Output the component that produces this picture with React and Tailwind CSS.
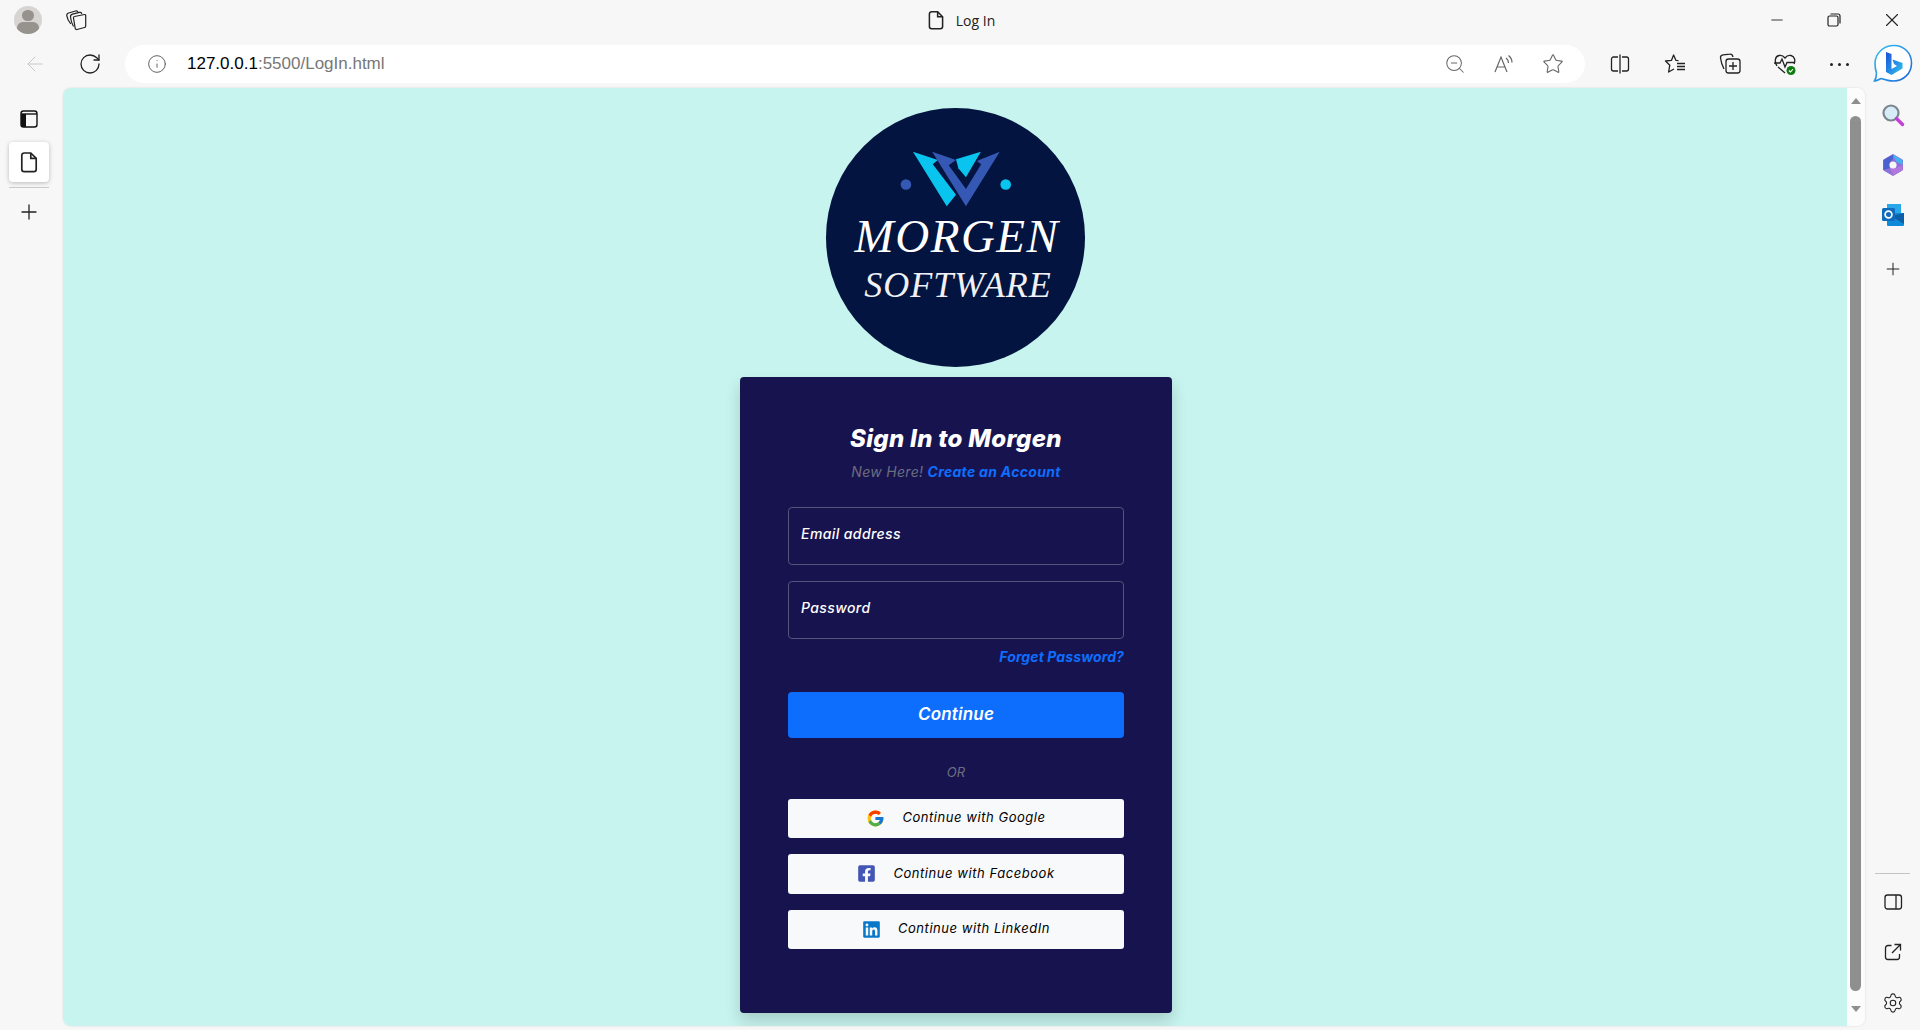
import React from "react"
import { ArrowLeft, Info, Minus, Plus, RotateCw, Settings, Star, X, ZoomOut } from "lucide-react"
import { FaFacebookSquare, FaLinkedin } from "react-icons/fa"
import { FcGoogle } from "react-icons/fc"

const TabsIcon = () => (
  <svg width="22" height="22" viewBox="0 0 22 22" fill="none" stroke="#222" strokeWidth="1.2" strokeLinejoin="round">
    <path d="M9.5 7.5 L19.5 5.5 a1 1 0 0 1 1.2 1 L20.7 17 a1.5 1.5 0 0 1 -1.2 1.5 L12 20.5 a1.5 1.5 0 0 1 -1.8 -1.2 L8.5 9 a1.2 1.2 0 0 1 1 -1.5 Z" />
    <path d="M8.5 17.5 C6.5 14 5.8 11 5.5 8 C5.3 6.5 6 5.6 7.5 5.2 L14.5 3.4 C15.8 3.1 16.5 3.6 16.8 5" />
    <path d="M5.8 15 C3.5 12 2.2 9 1.8 6.8 C1.6 5.3 2.2 4.4 3.6 4 L10.5 2 C11.8 1.7 12.6 2 13 3.2" />
  </svg>
)

const PageIcon = ({ size = 20 }) => (
  <svg width={size} height={size} viewBox="0 0 20 20" fill="none" stroke="#222" strokeWidth="1.4">
    <path d="M6 2.5 H11.5 L16 7 V16 a2 2 0 0 1 -2 2 H6 a2 2 0 0 1 -2 -2 V4.5 a2 2 0 0 1 2 -2 Z" />
    <path d="M11.5 2.5 V7 H16" />
  </svg>
)

const VerticalTabsIcon = () => (
  <svg width="20" height="20" viewBox="0 0 20 20" fill="none">
    <rect x="2" y="2" width="16" height="16" rx="2.5" stroke="#111" strokeWidth="1.4" />
    <path d="M2 5 H18" stroke="#111" strokeWidth="1.4" />
    <rect x="2" y="5" width="5" height="13" fill="#111" />
  </svg>
)

const RestoreIcon = () => (
  <svg width="16" height="16" viewBox="0 0 16 16" fill="none" stroke="#222" strokeWidth="1.2">
    <rect x="2" y="4" width="10" height="10" rx="1.5" />
    <path d="M4.5 2 H12 a2 2 0 0 1 2 2 V11.5" />
  </svg>
)

const ReadAloudIcon = () => (
  <svg width="22" height="22" viewBox="0 0 22 22" fill="none" stroke="#666" strokeWidth="1.2">
    <path d="M2 19 L8 4 L14 19 M4.2 14 H11.8" />
    <path d="M13 5 C15 6.5 15.5 8 15.5 10" />
    <path d="M15.5 2.5 C18 4.5 19 7 19 9.5" />
  </svg>
)

const SplitIcon = () => (
  <svg width="22" height="22" viewBox="0 0 22 22" fill="none" stroke="#222" strokeWidth="1.3">
    <path d="M9 4 H4.5 a2 2 0 0 0 -2 2 V16 a2 2 0 0 0 2 2 H9" />
    <path d="M13 4 H17.5 a2 2 0 0 1 2 2 V16 a2 2 0 0 1 -2 2 H13" />
    <path d="M11 1.5 V20.5" />
  </svg>
)

const FavoritesIcon = () => (
  <svg width="22" height="22" viewBox="0 0 22 22" fill="none" stroke="#222" strokeWidth="1.3">
    <path d="M14.5 7.6 L12 7.4 L9.6 2 L7.4 7.4 L1.5 8 L5.8 12.2 L4.6 19 L10 16 " strokeLinejoin="round" />
    <path d="M13 10.5 H21 M13 13.5 H21 M13 16.5 H21" />
  </svg>
)

const CollectionsIcon = () => (
  <svg width="22" height="22" viewBox="0 0 22 22" fill="none" stroke="#222" strokeWidth="1.3">
    <path d="M5 16 C3 12 2 9 1.5 5 C1.3 3 2.5 2 4 1.8 L11 1.2 C12.5 1 13.5 2 14 4" />
    <rect x="7" y="6" width="14" height="14" rx="2.5" />
    <path d="M14 9 V17 M10 13 H18" />
  </svg>
)

const HealthIcon = () => (
  <svg width="24" height="24" viewBox="0 0 24 24" fill="none">
    <path d="M4 14 C1.5 10 1.5 4.5 6 3.5 C8.5 3 10.5 4 12 6 C13.5 4 15.5 3 18 3.5 C22 4.5 22.5 9 21 12 M5 15 L12 21" stroke="#222" strokeWidth="1.3" />
    <path d="M1 11 H7 L9 7 L12 15 L14 10.5 H22" stroke="#222" strokeWidth="1.3" />
    <circle cx="18" cy="18.5" r="4.5" fill="#107c10" />
    <path d="M16 18.5 L17.5 20 L20 17.2" stroke="white" strokeWidth="1.1" />
  </svg>
)

const BingIcon = () => (
  <svg width="40" height="40" viewBox="0 0 40 40" fill="none">
    <defs>
      <linearGradient id="bingRing" x1="0" y1="0" x2="1" y2="1">
        <stop offset="0" stopColor="#35c1f1" />
        <stop offset="1" stopColor="#1b66d8" />
      </linearGradient>
      <linearGradient id="bingB" x1="0" y1="0" x2="1" y2="1">
        <stop offset="0" stopColor="#1b4fd8" />
        <stop offset="1" stopColor="#2ec5ef" />
      </linearGradient>
    </defs>
    <path d="M21 1.5 C31 1.5 38.5 9 38.5 19 C38.5 29.5 30.5 37 20.5 37 C16 37 11 35.5 8 34.5 C5 36 3 37 1.5 37 C3 34.5 3.5 32 3.5 29 C2.5 26 2 23 2 19.5 C2 9.5 10.5 1.5 21 1.5 Z" fill="white" stroke="url(#bingRing)" strokeWidth="1.6" />
    <path d="M13 8 L18.5 10 V25 L24 22 L21 20 L19.5 15.5 L29.5 19 V24.5 L18.5 31 L13 28 Z" fill="url(#bingB)" />
  </svg>
)

const SearchSideIcon = () => (
  <svg width="24" height="24" viewBox="0 0 24 24" fill="none">
    <circle cx="10" cy="10" r="7.5" fill="#d6ecf7" stroke="#7c8590" strokeWidth="2.2" />
    <path d="M15.5 15.5 L21.5 21.5" stroke="#c43fd8" strokeWidth="3.4" strokeLinecap="round" />
  </svg>
)

const CopilotIcon = () => (
  <svg width="24" height="24" viewBox="0 0 24 24" fill="none">
    <path d="M12 1.5 L21.5 7 V17 L12 22.5 L2.5 17 V7 Z" fill="#8f6fd8" stroke="#8f6fd8" strokeLinejoin="round" />
    <path d="M12 1.5 L21.5 7 V12 L15 8.5 Z" fill="#45b4ee" />
    <path d="M2.5 7 L12 1.5 V6 L9 9 V15 L2.5 17 Z" fill="#4a62d0" />
    <path d="M21.5 12 V17 L12 22.5 L9 15 L15 15 Z" fill="#b277dc" />
    <circle cx="12" cy="12" r="3.6" fill="#f7f7f7" />
  </svg>
)

const OutlookIcon = () => (
  <svg width="24" height="24" viewBox="0 0 24 24" fill="none">
    <rect x="6" y="1" width="14" height="11" fill="#28a8ea" />
    <path d="M6 10 H23 V22 a1 1 0 0 1 -1 1 H7 a1 1 0 0 1 -1 -1 Z" fill="#0f8ad8" />
    <path d="M10 13 L23 21 V10 Z" fill="#0a5fa8" />
    <rect x="1" y="5" width="13" height="13" rx="1.5" fill="#0f6cbd" />
    <circle cx="7.5" cy="11.5" r="3.4" stroke="white" strokeWidth="1.7" />
  </svg>
)

const SidePaneIcon = () => (
  <svg width="20" height="20" viewBox="0 0 20 20" fill="none" stroke="#222" strokeWidth="1.3">
    <rect x="2" y="3" width="16.5" height="14" rx="2.5" />
    <path d="M13 3 V17" />
  </svg>
)

const ExternalIcon = () => (
  <svg width="20" height="20" viewBox="0 0 20 20" fill="none" stroke="#222" strokeWidth="1.3">
    <path d="M8.5 3.5 H5 a2.5 2.5 0 0 0 -2.5 2.5 V15 a2.5 2.5 0 0 0 2.5 2.5 H14 a2.5 2.5 0 0 0 2.5 -2.5 V12" />
    <path d="M9 11 L17 3 M11.5 2.5 H17.5 V8.5" />
  </svg>
)

// zoom-crop coordinates of the logo mark
const LogoMark = () => (
  <svg width="112" height="57" viewBox="272 150 336 172" fill="none" className="ml-[2px]">
    <path d="M368 155 L470 320 L572 155 L503 183 L516 193 L470 268 L418 196 L440 180 Z" fill="#3558b4" />
    <path d="M310 155 L385 180 L370 193 L440 285 L412 320 Z" fill="#08c4ee" />
    <path d="M440 178 L515 155 L470 232 L447 205 Z" fill="#08c4ee" />
    <circle cx="289" cy="254" r="16" fill="#3558b4" />
    <circle cx="590" cy="254" r="16" fill="#08c4ee" />
  </svg>
)

const Logo = () => (
  <div className="w-[259px] h-[259px] rounded-full bg-[#02143f] flex flex-col items-center pt-[42px] shrink-0">
    <LogoMark />
    <div className="font-['Liberation_Serif',serif] italic text-white text-[47px] leading-[50px] mt-[4px] tracking-[1.5px] ml-[4px]">
      MORGEN
    </div>
    <div className="font-['Liberation_Serif',serif] italic text-[#f0f0f5] text-[36px] leading-[40px] mt-[4px] tracking-[1px] ml-[6px]">
      SOFTWARE
    </div>
  </div>
)

const SocialButton = ({ icon, label, height }) => (
  <button className={`${height} w-full bg-[#f8f9fa] rounded-[3px] flex items-center justify-center gap-[17px] pb-[1px] text-[13px] tracking-[0.55px] italic text-black`}>
    {icon}
    <span>{label}</span>
  </button>
)

const Field = ({ label }) => (
  <div className="h-[58px] border border-[#54537a] rounded-[4px] px-3 pt-[16px] text-[14px] leading-[20px] tracking-[0.4px] font-medium italic text-white">
    {label}
  </div>
)

const LoginCard = () => (
  <div className="w-[432px] h-[636px] mt-[10px] ml-[2px] shrink-0 bg-[#17134f] rounded-[4px] shadow-[0_8px_16px_rgba(0,0,0,0.16)] px-[48px] pt-[44px] font-['Inter',sans-serif]">
    <h1 className="text-[24px] leading-[36px] font-extrabold italic text-white text-center tracking-[0.3px]">
      Sign In to Morgen
    </h1>
    <p className="text-[14px] leading-[20px] italic text-[#6c6f80] text-center mt-[5px] tracking-[0.3px]">
      New Here! <span className="font-bold text-[#0d6efd]">Create an Account</span>
    </p>
    <div className="flex flex-col gap-4 mt-[25px]">
      <Field label="Email address" />
      <Field label="Password" />
    </div>
    <p className="text-[14px] leading-[20px] font-bold italic text-[#0d6efd] text-right mt-[8px] tracking-[0.1px]">
      Forget Password?
    </p>
    <button className="w-full h-[46px] mt-[25px] pb-[1px] bg-[#0d6efd] rounded-[4px] text-[17px] tracking-[0.2px] font-semibold italic text-white">
      Continue
    </button>
    <p className="text-[13px] leading-[20px] italic text-[#6c6f80] text-center mt-[24px]">OR</p>
    <div className="flex flex-col gap-4 mt-[17px]">
      <SocialButton height="h-[39px]" icon={<FcGoogle size={19} />} label="Continue with Google" />
      <SocialButton height="h-[40px]" icon={<FaFacebookSquare size={19} className="text-[#4355b5]" />} label="Continue with Facebook" />
      <SocialButton height="h-[39px]" icon={<FaLinkedin size={19} className="text-[#0a78c8]" />} label="Continue with LinkedIn" />
    </div>
  </div>
)

const ToolButton = ({ children }) => (
  <div className="w-[55px] flex items-center justify-center">{children}</div>
)

const App = () => {
  return (
    <div className="w-[1920px] h-[1030px] overflow-hidden flex flex-col bg-[#f7f7f7] font-['Open_Sans',sans-serif]">
      {/* title row */}
      <div className="h-[40px] shrink-0 flex items-center">
        <div className="flex items-center w-[92px] pl-[14px] gap-[23px]">
          <div className="w-[28px] h-[28px] rounded-full bg-[#d6d5d1] overflow-hidden flex flex-col items-center shrink-0">
            <div className="w-[12px] h-[12px] mt-[4px] rounded-full bg-[#96928d]" />
            <div className="w-[22px] h-[14px] mt-[1px] rounded-full bg-[#96928d]" />
          </div>
          <TabsIcon />
        </div>
        <div className="flex-1 flex items-center justify-center">
          <div className="flex items-center gap-[9px] ml-[80px]">
            <PageIcon size={22} />
            <span className="text-[14px] text-[#222]">Log In</span>
          </div>
        </div>
        <div className="flex items-center">
          <div className="w-[57px] flex justify-center"><Minus size={18} strokeWidth={1.2} color="#222" /></div>
          <div className="w-[58px] flex justify-center"><RestoreIcon /></div>
          <div className="w-[57px] flex justify-center"><X size={22} strokeWidth={1.2} color="#222" /></div>
        </div>
      </div>

      {/* address row */}
      <div className="h-[48px] py-[5px] shrink-0 flex items-center">
        <div className="w-[63px] flex justify-center pl-[7px]">
          <ArrowLeft size={24} strokeWidth={1} color="#c8c8c8" />
        </div>
        <div className="w-[54px] mr-[8px] flex justify-center">
          <RotateCw size={24} strokeWidth={1.3} color="#222" />
        </div>
        <div className="w-[1460px] h-[38px] rounded-full bg-white flex items-center pl-[22px] pr-[21px]">
          <Info size={20} strokeWidth={1.1} color="#555" />
          <span className="ml-[20px] text-[17px] font-['Liberation_Sans',sans-serif] text-[#777]">
            <span className="text-black">127.0.0.1</span>:5500/LogIn.html
          </span>
          <div className="ml-auto flex items-center gap-[27px]">
            <ZoomOut size={22} strokeWidth={1.1} color="#666" />
            <ReadAloudIcon />
            <Star size={22} strokeWidth={1.2} color="#666" />
          </div>
        </div>
        <div className="flex items-center ml-[7px]">
          <ToolButton><SplitIcon /></ToolButton>
          <ToolButton><FavoritesIcon /></ToolButton>
          <ToolButton><CollectionsIcon /></ToolButton>
          <ToolButton><HealthIcon /></ToolButton>
          <ToolButton>
            <div className="flex gap-[5px]">
              <div className="w-[3px] h-[3px] rounded-full bg-[#222]" />
              <div className="w-[3px] h-[3px] rounded-full bg-[#222]" />
              <div className="w-[3px] h-[3px] rounded-full bg-[#222]" />
            </div>
          </ToolButton>
        </div>
        <div className="ml-[6px]"><BingIcon /></div>
      </div>

      <div className="flex-1 min-h-0 flex">
        {/* left rail */}
        <div className="w-[63px] shrink-0 flex flex-col items-center pr-[5px]">
          <div className="mt-[21px]"><VerticalTabsIcon /></div>
          <div className="mt-[13px] w-[40px] h-[40px] rounded-[4px] bg-white shadow-[0_1px_4px_rgba(0,0,0,0.25)] flex items-center justify-center">
            <PageIcon size={24} />
          </div>
          <div className="mt-[5px] w-[40px] h-px bg-[#c9c9c9]" />
          <Plus size={24} strokeWidth={1.3} color="#222" className="mt-[12px]" />
        </div>

        {/* page */}
        <div className="w-[1802px] h-[938px] shrink-0 flex rounded-[8px] overflow-hidden shadow-[0_0_2px_rgba(0,0,0,0.15)]">
          <div className="flex-1 bg-[#c7f4ee] flex flex-col items-center pt-[20px]">
            <Logo />
            <LoginCard />
          </div>
          <div className="w-[18px] bg-[#fcfcfc] flex flex-col items-center pt-[10px] pr-[1px]">
            <div className="w-0 h-0 border-x-[5px] border-x-transparent border-b-[6px] border-b-[#8f8f8f]" />
            <div className="w-[11px] h-[875px] mt-[12px] rounded-full bg-[#8f8f8f]" />
            <div className="w-0 h-0 mt-[15px] border-x-[5px] border-x-transparent border-t-[6px] border-t-[#8f8f8f]" />
          </div>
        </div>

        {/* right rail */}
        <div className="flex-1 flex flex-col items-center">
          <div className="mt-[15px]"><SearchSideIcon /></div>
          <div className="mt-[26px]"><CopilotIcon /></div>
          <div className="mt-[26px]"><OutlookIcon /></div>
          <Plus size={20} strokeWidth={1.2} color="#222" className="mt-[32px]" />
          <div className="mt-auto w-[35px] h-px bg-[#c4c4c4]" />
          <div className="mt-[18px]"><SidePaneIcon /></div>
          <div className="mt-[30px]"><ExternalIcon /></div>
          <div className="mt-[30px] mb-[16px]"><Settings size={22} strokeWidth={1.2} color="#222" /></div>
        </div>
      </div>
    </div>
  )
}

export default App
